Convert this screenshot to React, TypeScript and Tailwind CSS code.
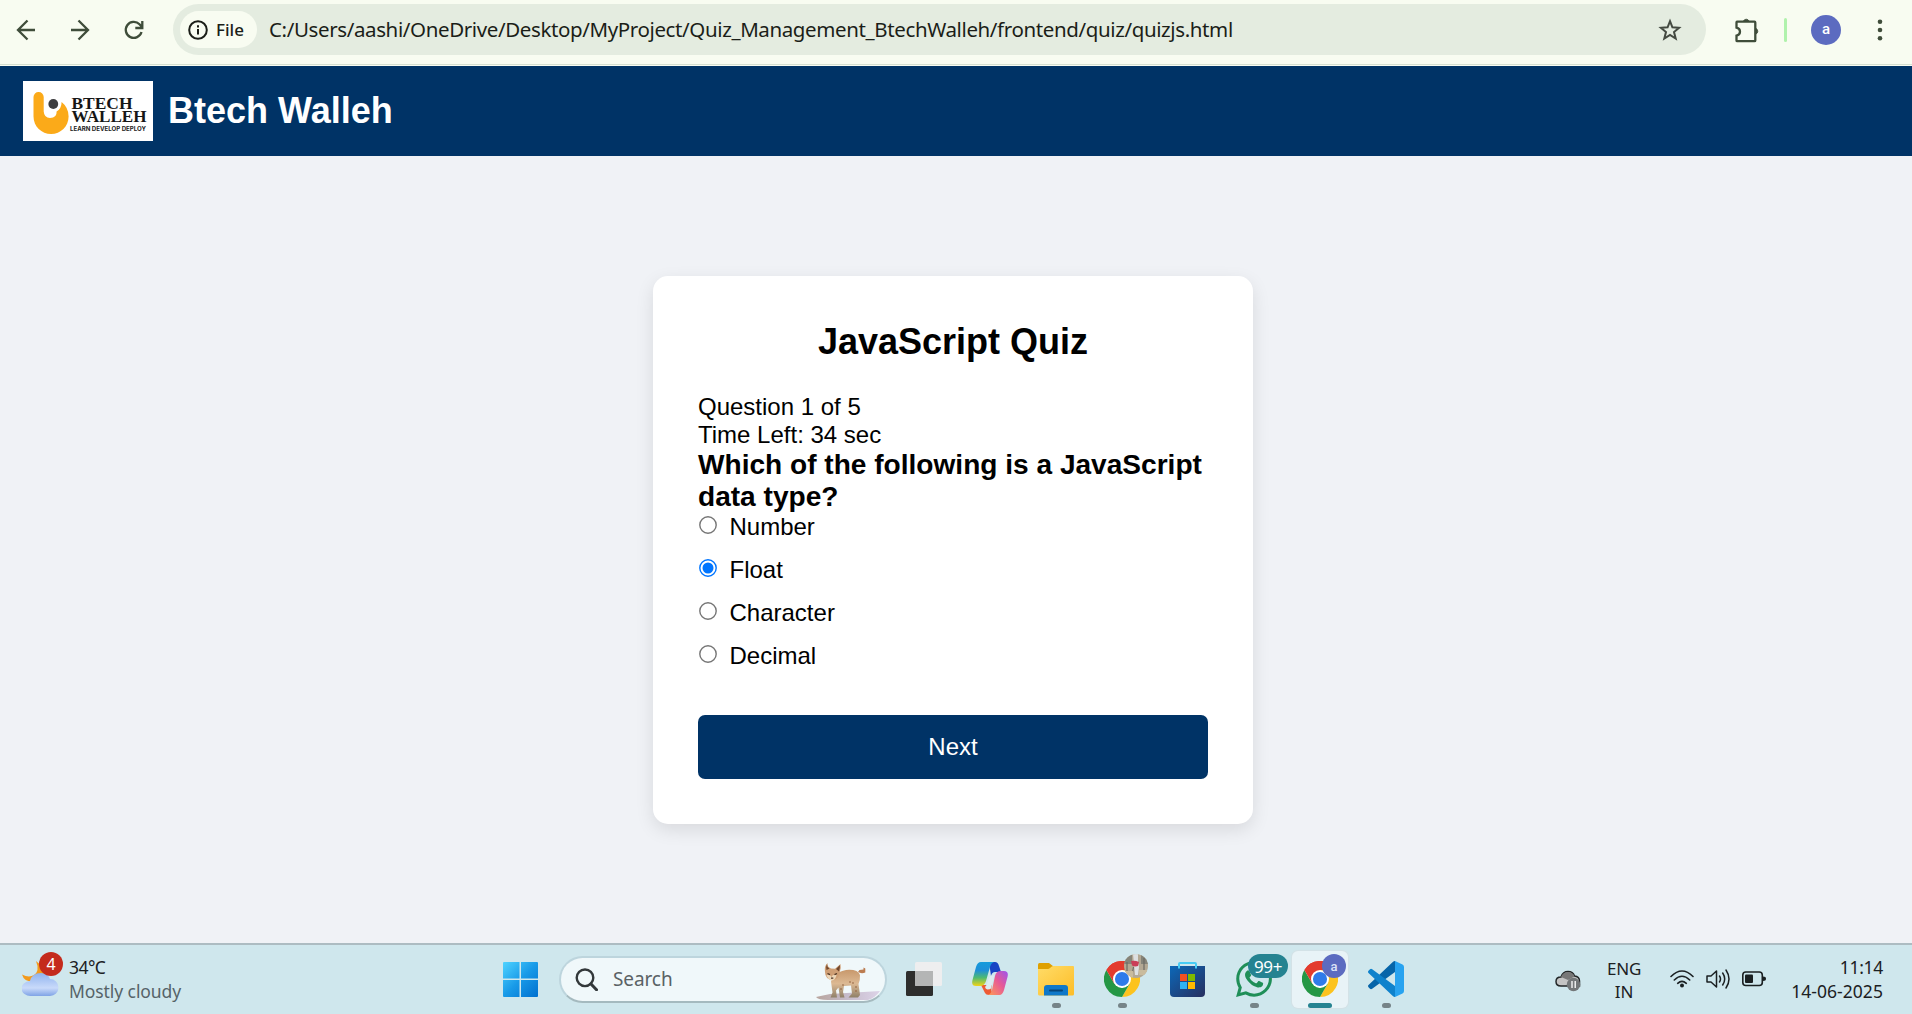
import React, { useState } from "react";

const UI = "font-['Noto_Sans','Open_Sans',sans-serif]";

function Toolbar() {
  return (
    <div className="flex h-[66px] shrink-0 flex-col bg-[#f8fcf1]">
      <div className="flex h-[64px] items-start pt-1 pl-[14px]">
        <div className="flex h-[51px] w-[159px] items-center gap-[30px] text-[#3f4d3a]">
          <svg width="24" height="24" viewBox="0 0 24 24" fill="none" stroke="currentColor" strokeWidth="2.3">
            <path d="M21 12H4.5M13.5 2.5 4 12l9.500 9.500" />
          </svg>
          <svg width="24" height="24" viewBox="0 0 24 24" fill="none" stroke="currentColor" strokeWidth="2.300">
            <path d="M3 12H19.500M10.500 2.500 20 12l-9.500 9.500" />
          </svg>
          <svg width="24" height="24" viewBox="0 0 24 24" fill="none" stroke="currentColor" strokeWidth="2.300">
            <path d="M19.500 14a8 8 0 1 1-2-7.700L20 9M20.300 3v7h-7" />
          </svg>
        </div>
        <div className="flex h-[51px] w-[1533px] items-center rounded-full bg-[#e4ece0] pr-[24px] pl-[7px]">
          <div className="flex h-[37px] w-[77px] items-center rounded-full bg-[#f8fcf1] pl-2 text-[#1b1e18]">
            <svg width="20" height="20" viewBox="0 0 20 20" fill="none" stroke="currentColor" strokeWidth="2">
              <circle cx="10" cy="10" r="8.800" />
              <path d="M10 9v5.500M10 5.200v2.200" />
            </svg>
            <span className={`${UI} ml-2 text-[17px] leading-none font-medium`}>File</span>
          </div>
          <span className={`${UI} ml-3 text-[20.500px] leading-none tracking-[-0.380px] whitespace-nowrap text-[#1b1e18]`}>
            C:/Users/aashi/OneDrive/Desktop/MyProject/Quiz_Management_BtechWalleh/frontend/quiz/quizjs.html
          </span>
          <svg className="ml-auto" width="24" height="24" viewBox="0 0 24 24" fill="none" stroke="#444a41" strokeWidth="2">
            <path d="M12 3.200l2.400 6.100 6.700.5-5.100 4.300 1.700 6.500-5.700-3.600-5.700 3.600L8 14.100 2.900 9.800l6.700-.5z" />
          </svg>
        </div>
        <div className="flex h-[51px] items-center pl-[29px]">
          <svg width="25" height="26" viewBox="0 0 25 26" fill="none" stroke="#3f4d3a" strokeWidth="2.300">
            <path d="M2 4.600h17.500q.8 0 .8.8v18q0 .8-.8.8H2.300q-.8 0-.8-.8v-4.700q3.500-.9 3.500-4t-3.500-4V5.400q0-.8.500-.8z" />
            <path d="M8.500 4a3 3 0 0 1 5.500 0zM21 11.500a3 3 0 0 1 0 5.500z" fill="#3f4d3a" strokeWidth=".8" />
          </svg>
          <div className="ml-[24px] h-6 w-[3px] rounded bg-[#b0f2ac]" />
          <div className="ml-6 flex size-[30px] items-center justify-center rounded-full bg-[#5c6bc0] font-['Roboto',sans-serif] text-[15px] font-medium text-white">
            a
          </div>
          <svg className="ml-[34px]" width="10" height="24" viewBox="0 0 10 24" fill="#3f4d3a">
            <circle cx="5" cy="3.800" r="2.300" />
            <circle cx="5" cy="12" r="2.300" />
            <circle cx="5" cy="20.200" r="2.300" />
          </svg>
        </div>
      </div>
      <div className="h-px bg-[#d5dfd0]" />
    </div>
  );
}

function Logo() {
  return (
    <svg width="130" height="60" viewBox="0 0 130 60" className="bg-white">
      <path
        d="M10.500 16a5.100 5.100 0 0 1 10.200 0v14.500q.5 6.500 6.300 6.500 7 0 6.600-6.500 5-3 5-9.500 7 5.500 7 14.500c0 10-8 17.500-17.500 17.500s-17.600-7.500-17.600-17.500z"
        fill="#fbaa19"
      />
      <circle cx="30.300" cy="23" r="4.900" fill="#3d3d3f" />
      <g fill="#161616" fontFamily="'Liberation Serif',serif" fontWeight="700">
        <text x="48.500" y="28" fontSize="16.500" textLength="61" lengthAdjust="spacingAndGlyphs">BTECH</text>
        <text x="48.500" y="41" fontSize="16.500" textLength="75" lengthAdjust="spacingAndGlyphs">WALLEH</text>
      </g>
      <text x="47" y="49.500" fontSize="6" fontFamily="Inter,sans-serif" fontWeight="700" fill="#222" textLength="76" lengthAdjust="spacingAndGlyphs">
        LEARN DEVELOP DEPLOY
      </text>
    </svg>
  );
}

function Quiz() {
  const [picked, setPicked] = useState("Float");
  return (
    <main className="flex flex-1 items-start justify-center bg-[#f0f2f6] pt-[120px] pr-[6px]">
      <section className="flex h-[548px] w-[600px] flex-col rounded-[15px] bg-white px-[45px] pt-[45px] text-[24px] leading-[28px] text-black shadow-[0_6px_18px_rgba(0,0,0,0.100)]">
        <h2 className="text-center text-[36px] leading-[42px] font-bold">JavaScript Quiz</h2>
        <p className="mt-[30px]">Question 1 of 5</p>
        <p>Time Left: 34 sec</p>
        <h3 className="text-[28.080px] leading-[32px] font-bold">Which of the following is a JavaScript data type?</h3>
        <div className="flex flex-col gap-[15px]">
          {["Number", "Float", "Character", "Decimal"].map((name) => (
            <label key={name} className="flex h-[28px] items-center">
              <button
                role="radio"
                aria-checked={picked === name}
                onClick={() => setPicked(name)}
                className="mb-[5px] ml-[0.500px] size-[18px]"
              >
                <svg width="18" height="18" viewBox="0 0 18 18">
                  <circle cx="9" cy="9" r="8.200" fill="#fff" stroke={picked === name ? "#0075ff" : "#767676"} strokeWidth="1.400" />
                  {picked === name && <circle cx="9" cy="9" r="5.500" fill="#0075ff" />}
                </svg>
              </button>
              <span className="ml-[13px]">{name}</span>
            </label>
          ))}
        </div>
        <button className="mt-[45px] h-[64px] rounded-[7px] bg-[#003366] text-white">Next</button>
      </section>
    </main>
  );
}

function Chrome() {
  return (
    <svg width="36" height="36" viewBox="0 0 48 48">
      <path d="M24 24 3.200 12A24 24 0 0 1 44.800 12z" fill="#e33b2e" />
      <path d="M24 12h20.800A24 24 0 0 1 24 48l10.400-18z" fill="#fcc31e" />
      <path d="M3.200 12 13.600 30l10.400 6 10.400-6L24 48A24 24 0 0 1 3.200 12z" fill="#249745" />
      <path d="M3.200 12A24 24 0 0 1 44.800 12H24L13.600 30z" fill="#e33b2e" />
      <circle cx="24" cy="24" r="12" fill="#fff" />
      <circle cx="24" cy="24" r="9.400" fill="#2f7bea" />
    </svg>
  );
}

function Tile({ children, state = "" }: { children: React.ReactNode; state?: "" | "open" | "active" }) {
  return (
    <div
      className={`relative flex h-[57px] w-[56px] shrink-0 flex-col items-center rounded-[6px] pt-[10px] ${state === "active" ? "bg-[#e8f3f7] shadow-[0_0_1px_1px_#d3e1e6]" : ""}`}
    >
      {children}
      {state === "open" && <span className="absolute bottom-0 h-[5px] w-[9px] rounded-full bg-[#768488]" />}
      {state === "active" && <span className="absolute bottom-0 h-[5px] w-6 rounded-full bg-[#258391]" />}
    </div>
  );
}

function Lynx() {
  return (
    <svg width="66" height="40" viewBox="0 0 66 40">
      <defs>
        <linearGradient id="mat" x1="0" x2="1">
          <stop offset="0" stopColor="#b8a59d" />
          <stop offset=".5" stopColor="#c6bccb" />
          <stop offset="1" stopColor="#ddd3e8" />
        </linearGradient>
        <linearGradient id="fur" x1="0" y1="0" x2="0" y2="1">
          <stop offset="0" stopColor="#c8986c" />
          <stop offset=".5" stopColor="#dcb993" />
          <stop offset="1" stopColor="#8f8068" />
        </linearGradient>
      </defs>
      <path d="M0 35 14 32l50-3q-5 7-12 9H12Q2 38 0 35z" fill="url(#mat)" />
      <path d="M18 13q4-3 12-5 12-1 14 5 .3 5-1.500 9l1.500 11-2 2.500h-9.500l3.500-4-1-8-7 .5-1 6 1.500 5.500H24l-1.500-10-2.500 3 1 7h-6.500l2-5-1.500-11z" fill="url(#fur)" />
      <path d="m42 10 1.500-2 4-.5V5.500l1.800 1v4q-4 1.500-7.300-.5z" fill="#bb7c50" />
      <path d="M9 10Q8 4 11.500 1q-.5 4 3.500 5.500l4 .3L24.500 2q1 4-1 9-1 7-7 7-7.500-1-7.500-8z" fill="#cf9f75" />
      <path d="M11 2q-1.500 3-.5 6l3-1.500Q10.800 5 11 2zM24 3l-4 4 3 2.500q1-3 1-6.500z" fill="#72482e" />
      <path d="M10.500 13q3.500-1 5 2 1-3 5-2-1 5-4.500 5.500-4-.5-5.500-5.500z" fill="#ecd6b8" />
      <path d="M11.500 11.500 14 12.700M18.500 12.700l2.500-1.200M15 16.200h2.300" stroke="#4d3524" strokeWidth="1.300" />
      <g fill="#8c5b39">
        <circle cx="27" cy="23" r=".8" /><circle cx="37" cy="21" r=".8" /><circle cx="40" cy="25" r=".8" />
        <circle cx="25" cy="27" r=".8" /><circle cx="40" cy="29" r=".8" /><circle cx="34" cy="20" r=".8" />
      </g>
    </svg>
  );
}

function Taskbar() {
  return (
    <footer className={`${UI} flex h-[71px] shrink-0 items-start border-t-2 border-[#adbcc2] bg-[#cfe7ed] pt-[6px] text-[#1b2022]`}>
      <div className="flex h-[57px] w-[492px] items-start pl-[22px]">
        <div className="relative pt-[10px]">
          <svg width="37" height="36" viewBox="0 0 37 36">
            <defs>
              <linearGradient id="cloud" x1="0" y1="0" x2="0" y2="1">
                <stop offset="0" stopColor="#8fb3ee" />
                <stop offset=".65" stopColor="#c9dafa" />
                <stop offset="1" stopColor="#7fa3e6" />
              </linearGradient>
            </defs>
            <path d="M14 0q4 10-2 14-5 3-12-.500 2 7 10 7 14-1 14-12z" fill="#f39a1c" />
            <path d="M9 35a9 7.500 0 0 1-1-15q2-8 11-8 7 0 9 6a8.500 8.500 0 0 1 0 17z" fill="url(#cloud)" />
          </svg>
          <span className="absolute top-[1px] left-[17px] flex size-6 items-center justify-center rounded-full bg-[#c42b1c] text-[16px] leading-none text-white">
            4
          </span>
        </div>
        <div className="ml-[10px] pt-[3.500px] text-[17.500px] leading-[24.500px]">
          <div className="tracking-[-0.550px]">34°C</div>
          <div className="tracking-[-0.080px] whitespace-nowrap text-[#566368]">Mostly cloudy</div>
        </div>
      </div>
      <div className="flex gap-[10px]">
        <Tile>
          <svg width="35" height="35" viewBox="0 0 35 35" className="mt-px">
            <defs>
              <linearGradient id="win" x1="0" y1="0" x2="1" y2="1">
                <stop offset="0" stopColor="#4fd3ff" />
                <stop offset=".5" stopColor="#189ae8" />
                <stop offset="1" stopColor="#0070cf" />
              </linearGradient>
            </defs>
            <path d="M0 1q0-1 1-1h15.500v16.500H0zM18 0h16q1 0 1 1v15.500H18zM0 18h16.500v17H1q-1 0-1-1zM18 18h17v16q0 1-1 1H18z" fill="url(#win)" />
          </svg>
        </Tile>
        <div className="mt-[5px] mr-[-1px] ml-px flex h-[47px] w-[328px] items-center rounded-full border-2 border-[#bdd5dd] border-b-[#a5babf] bg-[#f0f8fa] pl-[14px]">
          <svg width="23" height="23" viewBox="0 0 23 23" fill="none" stroke="#33383a" strokeWidth="2.400">
            <circle cx="10" cy="9.800" r="8.300" />
            <path d="m15.800 15.800 5.700 6" strokeWidth="3" strokeLinecap="round" />
          </svg>
          <span className="ml-[15px] text-[19px] leading-none tracking-[-0.100px] text-[#5a6265]">Search</span>
          <div className="mt-[4px] mr-[3px] ml-auto"><Lynx /></div>
        </div>
        <Tile>
          <svg width="38" height="36" viewBox="0 0 38 36">
            <rect x="1" y="10" width="27" height="25" rx="1.500" fill="#2e2e2d" />
            <rect x="10" y="1" width="27" height="24" rx="1.500" fill="#eeeeef" />
            <path d="M10 10h18v15H11.500q-1.500 0-1.500-1.500z" fill="#b4b5b5" />
          </svg>
        </Tile>
        <Tile>
          <svg width="36" height="36" viewBox="0 0 36 36">
            <defs>
              <linearGradient id="cpa" x1="0" y1="0" x2="0" y2="1">
                <stop offset="0" stopColor="#169bdb" />
                <stop offset=".35" stopColor="#1f8fd8" />
                <stop offset=".65" stopColor="#4dba73" />
                <stop offset="1" stopColor="#f2d316" />
              </linearGradient>
              <linearGradient id="cpb" x1="1" y1="0" x2="0" y2="1">
                <stop offset="0" stopColor="#9d54ee" />
                <stop offset=".45" stopColor="#e65996" />
                <stop offset="1" stopColor="#ff9c55" />
              </linearGradient>
            </defs>
            <path d="M17 1h6q3 0 4 4l2 6h-6q-3 0-4 4z" fill="#1844c4" />
            <path d="M9 24l4 8q1 2 4 2h5q-4-4-2-10z" fill="#ee5b35" />
            <path d="M9 1h13q-3 1-4 5l-4 14q-1.500 5-6 5H4q-5 0-3.500-6L4 6q1.500-5 5-5z" fill="url(#cpa)" />
            <path d="M27.500 34H16q3-1 4-5l3-14q1-5 6-5h3q5 0 3.500 6L32 29q-1.500 5-4.500 5z" fill="url(#cpb)" />
            <path d="M19.500 14.500h2.800l-3.300 13q-1 1-3.500 1-2-.5-2.500-2.500 2-2 3-6 1-4.500 3.500-5.500z" fill="#dcecf1" />
          </svg>
        </Tile>
        <Tile state="open">
          <svg width="36" height="36" viewBox="0 0 36 36">
            <defs>
              <linearGradient id="fold" x1="0" y1="0" x2="1" y2="1">
                <stop offset="0" stopColor="#ffdc68" />
                <stop offset="1" stopColor="#fdbd27" />
              </linearGradient>
            </defs>
            <path d="M0 10V3.500Q0 2 1.500 2H11l4.500 3.500L11 10z" fill="#dfa000" />
            <path d="M0 8h10q1 0 2-1l1.500-1.300q.7-.7 2-.7H35q1 0 1 1v27q0 1.500-1.500 1.500h-33Q0 34.500 0 33z" fill="url(#fold)" />
            <path d="M6 34.500V27q0-3 3-3h18q3 0 3 3v7.500z" fill="#0f78c9" />
            <path d="M12 29.500h12" stroke="#074579" strokeWidth="2" strokeLinecap="round" />
          </svg>
        </Tile>
        <Tile state="open">
          <Chrome />
          <svg className="absolute top-[3px] left-[30px]" width="24" height="24" viewBox="0 0 24 24">
            <defs><clipPath id="face"><circle cx="12" cy="12" r="12" /></clipPath></defs>
            <g clipPath="url(#face)">
              <path d="M0 0h24v24H0z" fill="#b3a893" />
              <path d="M0 0h8v10H0zM17 1h7v9h-7z" fill="#858479" />
              <path d="M9 0h5v8l1 5-1 8h-3z" fill="#dde0e2" />
              <path d="M7 7q4-1 8 1l-1 4q-3 1-6-.5z" fill="#cb3d58" />
              <path d="m9.500 13-1.500 8M20 4v16M3 8v9" stroke="#6c6b64" strokeWidth="1.200" />
              <path d="M1 17h8v7H1zM15 16h8v5h-8z" fill="#c9bb9d" />
            </g>
          </svg>
        </Tile>
        <Tile>
          <svg width="36" height="36" viewBox="0 0 36 36">
            <defs>
              <linearGradient id="store" x1="0" y1="0" x2="1" y2="1">
                <stop offset="0" stopColor="#0c68b8" />
                <stop offset="1" stopColor="#272f5f" />
              </linearGradient>
            </defs>
            <path d="M0 5h35v27q0 4-4 4H4q-4 0-4-4z" fill="url(#store)" />
            <path d="M9 7.500V3q0-1 1-1h15q1 0 1 1v4.500" fill="none" stroke="#48ccf5" strokeWidth="2" />
            <path d="M10 13h7v7h-7z" fill="#f25022" />
            <path d="M18 13h7v7h-7z" fill="#7fba00" />
            <path d="M10 21h7v7h-7z" fill="#2fb2f2" />
            <path d="M18 21h7v7h-7z" fill="#ffb900" />
          </svg>
        </Tile>
        <Tile state="open">
          <svg width="36" height="36" viewBox="0 0 24 24" fill="#1f8f58">
            <path d="M17.472 14.382c-.297-.149-1.758-.867-2.030-.967-.273-.099-.471-.148-.67.150-.197.297-.767.966-.940 1.164-.173.199-.347.223-.644.075-.297-.150-1.255-.463-2.390-1.475-.883-.788-1.480-1.761-1.653-2.059-.173-.297-.018-.458.130-.606.134-.133.298-.347.446-.520.149-.174.198-.298.298-.497.099-.198.050-.371-.025-.520-.075-.149-.669-1.612-.916-2.207-.242-.579-.487-.5-.669-.51-.173-.008-.371-.010-.570-.010-.198 0-.520.074-.792.372-.272.297-1.040 1.016-1.040 2.479 0 1.462 1.065 2.875 1.213 3.074.149.198 2.096 3.200 5.077 4.487.709.306 1.262.489 1.694.625.712.227 1.360.195 1.871.118.571-.085 1.758-.719 2.006-1.413.248-.694.248-1.289.173-1.413-.074-.124-.272-.198-.57-.347M12.051 21.785a9.870 9.870 0 0 1-5.031-1.378l-.361-.214-3.741.982.998-3.648-.235-.374a9.860 9.860 0 0 1-1.510-5.260c.001-5.450 4.436-9.884 9.888-9.884a9.880 9.880 0 0 1 9.877 9.892c-.003 5.450-4.437 9.884-9.885 9.884M20.464 3.488A11.820 11.820 0 0 0 12.050 0C5.495 0 .160 5.335.157 11.892c0 2.096.547 4.142 1.588 5.945L.057 24l6.305-1.654a11.880 11.880 0 0 0 5.683 1.448h.005c6.554 0 11.890-5.335 11.893-11.893a11.820 11.820 0 0 0-3.480-8.413z" />
          </svg>
          <span className="absolute top-[3px] left-[22px] flex h-6 w-[40px] items-center justify-center rounded-full bg-[#258391] text-[17px] leading-none tracking-[-0.400px] text-white">
            99+
          </span>
        </Tile>
        <Tile state="active">
          <Chrome />
          <span className="absolute top-[3px] left-[30px] flex size-6 items-center justify-center rounded-full bg-[#5c6bc0] font-['Roboto',sans-serif] text-[13px] leading-none font-medium text-[#dce2f7]">
            a
          </span>
        </Tile>
        <Tile state="open">
          <svg width="36" height="36" viewBox="0 0 36 36">
            <path d="M.5 24Q-.5 25 .5 26.200L2 27.700q1 .9 2.200 0L27 11V0q-1.200 0-2.200 1z" fill="#0765a9" />
            <path d="M.5 12Q-.5 11 .5 9.800L2 8.300q1-.9 2.200 0L27 25v11q-1.200 0-2.200-1z" fill="#0f82cc" />
            <path d="m27 0 7.500 3.500Q36 4.200 36 6v24q0 1.700-1.500 2.500L27 36z" fill="#28a3f0" />
          </svg>
        </Tile>
      </div>
      <div className="flex h-[57px] flex-1 items-start pr-[29px]">
        <svg className="mt-[19px] ml-[141px]" width="26" height="22" viewBox="0 0 26 22">
          <path d="M6 16Q1 16 1 11.500T6 7q2-5.500 7-5.500T19.500 6q5 .5 5 5v5z" fill="#c4c4c4" stroke="#222627" strokeWidth="1.500" />
          <path d="M6 7q2-5 7-5t6.500 4.500L13 10z" fill="#777" />
          <circle cx="18.500" cy="14.500" r="6.700" fill="#737779" />
          <path d="M17 11v7M20.200 11v7" stroke="#fff" strokeWidth="1.300" />
        </svg>
        <div className="ml-[23px] w-[40px] pt-[6px] text-center text-[17px] leading-[23px] tracking-[-0.200px]">
          <div>ENG</div>
          <div>IN</div>
        </div>
        <div className="mt-[17px] ml-[26px] flex gap-[12px]">
          <svg width="24" height="22" viewBox="0 0 24 22" fill="none" stroke="#1b2022" strokeWidth="1.600" strokeLinecap="round">
            <path d="M1 8.500q11-11 22 0M4.300 12q7.700-7.500 15.400 0M7.700 15.300q4.300-4 8.600 0" />
            <circle cx="12" cy="17.500" r="2" fill="#1b2022" stroke="none" />
          </svg>
          <svg width="24" height="22" viewBox="0 0 24 22" fill="none" stroke="#1b2022" strokeWidth="1.500" strokeLinecap="round" strokeLinejoin="round">
            <path d="M1 8v6h4l5.500 5V3L5 8zM13.500 8q2 3 0 6M16.700 5q4 6 0 12M20 2q6 9 0 18" />
          </svg>
          <svg width="25" height="22" viewBox="0 0 25 22">
            <rect x=".8" y="4" width="19.500" height="13.500" rx="3" fill="none" stroke="#1b2022" strokeWidth="1.600" />
            <rect x="3" y="6.500" width="8" height="8.500" rx="1" fill="#1b2022" />
            <path d="M21 8.500q3 0 3 2.200T21 13z" fill="#1b2022" />
          </svg>
        </div>
        <div className="ml-auto pt-[3.500px] text-right text-[17.500px] leading-[24.500px]">
          <div className="tracking-[-0.300px]">11:14</div>
          <div className="tracking-[0.050px]">14-06-2025</div>
        </div>
      </div>
    </footer>
  );
}

export default function App() {
  return (
    <div className="flex h-[1014px] w-[1912px] flex-col overflow-hidden font-['Liberation_Sans',Arial,sans-serif]">
      <Toolbar />
      <header className="flex h-[90px] shrink-0 items-center bg-[#003366] pl-[23px]">
        <Logo />
        <h1 className="ml-[15px] text-[36px] leading-[42px] font-bold text-white">Btech Walleh</h1>
      </header>
      <Quiz />
      <Taskbar />
    </div>
  );
}
